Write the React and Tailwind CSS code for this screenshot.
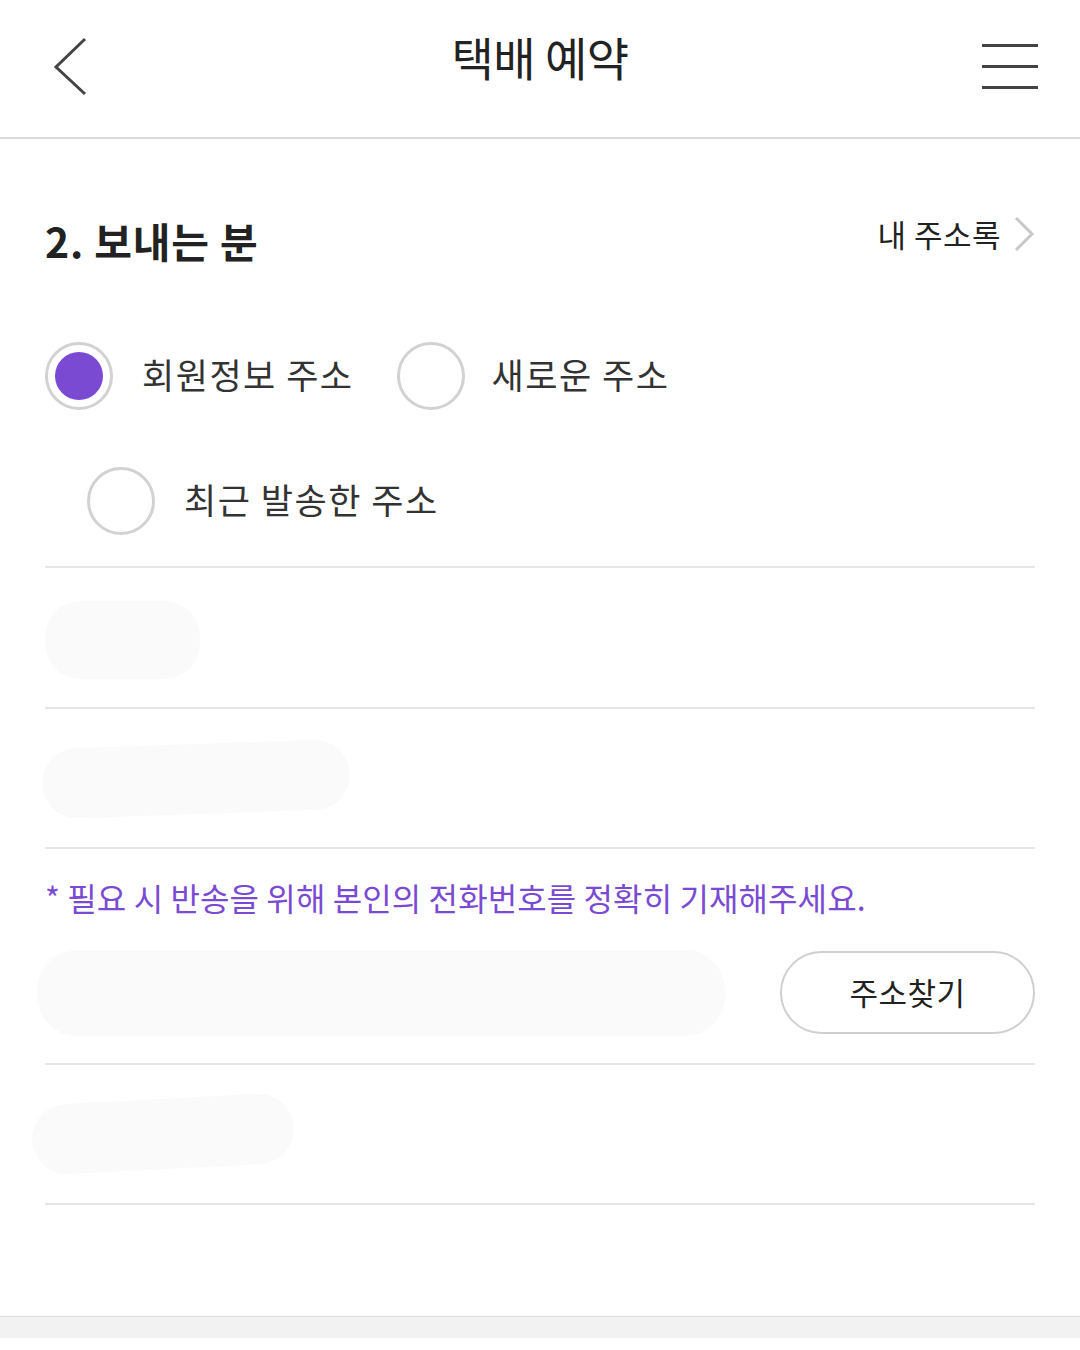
import React from "react";

const font = { fontFamily: '"Noto Sans CJK KR", "Noto Sans", sans-serif' };

function Radio({ checked }) {
  return (
    <div className="w-[68px] h-[68px] rounded-full border-[3px] border-[#d2d2d2] flex items-center justify-center shrink-0 bg-white">
      {checked && <div className="w-[48px] h-[48px] rounded-full bg-[#7a4bd2]" />}
    </div>
  );
}

export default function App() {
  return (
    <div className="w-[1080px] h-[1350px] bg-white flex flex-col" style={font}>
      {/* Header */}
      <div className="h-[139px] border-b-2 border-[#dcdcdc] flex items-start justify-between px-[52px] shrink-0 relative">
        <svg width="40" height="60" viewBox="0 0 40 60" className="mt-[36px]">
          <path d="M33 3 L4 31 L33 58" fill="none" stroke="#444" strokeWidth="3" />
        </svg>
        <div className="absolute left-0 right-0 top-[26px] text-center text-[46px] leading-[60px] text-[#222] tracking-[-0.5px] pointer-events-none">
          택배 예약
        </div>
        <div className="flex flex-col gap-[18px] mt-[44px] mr-[-10px]">
          <div className="w-[56px] h-[3px] bg-[#444]" />
          <div className="w-[56px] h-[3px] bg-[#444]" />
          <div className="w-[56px] h-[3px] bg-[#444]" />
        </div>
      </div>

      <div className="px-[45px] flex flex-col">
        {/* Section title */}
        <div className="pt-[72px] h-[132px] flex items-start justify-between">
          <div className="h-[60px] flex items-center text-[41px] font-bold text-[#222] tracking-[0.8px]">2. 보내는 분</div>
          <div className="h-[50px] flex items-center gap-[12px] text-[31px] text-[#222] -mt-[2px] tracking-[0.5px]">
            <span>내 주소록</span>
            <svg width="22" height="36" viewBox="0 0 22 36">
              <path d="M3 2 L19 18 L3 34" fill="none" stroke="#c8c8c8" strokeWidth="3" />
            </svg>
          </div>
        </div>

        {/* Radios */}
        <div className="mt-[71px] flex items-center">
          <Radio checked />
          <span className="ml-[29px] -mt-[4px] text-[35px] text-[#333] tracking-[1.5px]">회원정보 주소</span>
          <div className="ml-[43px] flex items-center">
            <Radio />
            <span className="ml-[27px] -mt-[4px] text-[35px] text-[#333] tracking-[1.5px]">새로운 주소</span>
          </div>
        </div>
        <div className="mt-[57px] flex items-center pl-[42px]">
          <Radio />
          <span className="ml-[29px] -mt-[4px] text-[35px] text-[#333] tracking-[1.5px]">최근 발송한 주소</span>
        </div>

        <div className="mt-[31px] h-[2px] bg-[#e6e6e6]" />

        <div className="h-[139px] flex items-center">
          <div className="w-[155px] h-[78px] rounded-[36px] bg-[#fafafa] mt-[4px]" />
        </div>
        <div className="h-[2px] bg-[#e6e6e6]" />
        <div className="h-[138px] flex items-center">
          <div className="w-[308px] h-[70px] rounded-[36px] bg-[#fafafa] -ml-[3px] mt-[2px] -rotate-[2deg]" />
        </div>
        <div className="h-[2px] bg-[#e6e6e6]" />

        <div className="mt-[28px] h-[40px] flex items-center text-[32px] text-[#7a4bd2] tracking-[0.1px] whitespace-nowrap">
          * 필요 시 반송을 위해 본인의 전화번호를 정확히 기재해주세요.
        </div>

        <div className="mt-[31px] flex items-center justify-between">
          <div className="w-[688px] h-[86px] rounded-[40px] bg-[#fafafa] -ml-[8px] mt-[2px]" />
          <div className="w-[255px] h-[83px] rounded-full border-2 border-[#cfcfcf] flex items-center justify-center text-[31px] text-[#222] tracking-[0.5px]">
            주소찾기
          </div>
        </div>

        <div className="mt-[27px] h-[2px] bg-[#e6e6e6]" />
        <div className="h-[138px] flex items-center">
          <div className="w-[262px] h-[70px] rounded-[36px] bg-[#fafafa] -ml-[13px] -rotate-[3deg]" />
        </div>
        <div className="h-[2px] bg-[#e6e6e6]" />
      </div>

      <div className="flex-1" />
      <div className="h-[22px] bg-[#f2f2f2] border-t border-[#dcdcdc] shrink-0" />
      <div className="h-[12px] bg-white shrink-0" />
    </div>
  );
}
